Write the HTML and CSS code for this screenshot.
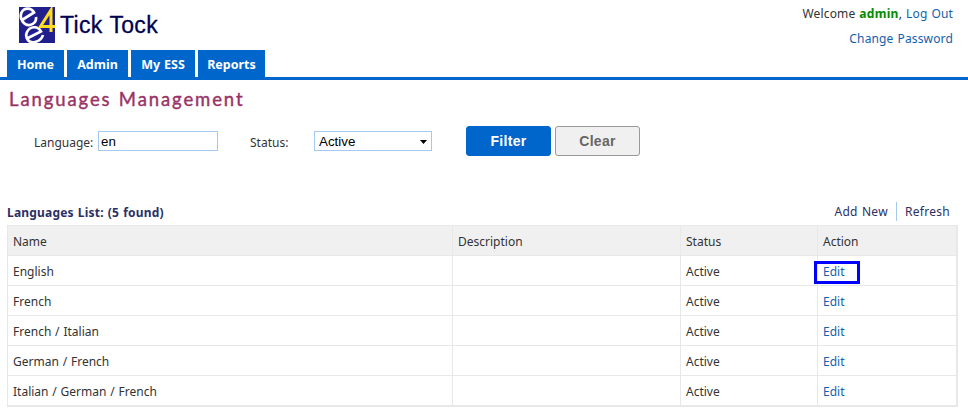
FILE: index.html
```html
<!DOCTYPE html>
<html lang="en">
<head>
<meta charset="utf-8">
<title>Languages Management</title>
<link rel="stylesheet" href="styles.css">
</head>
<body>
<header class="top">
  <div class="brand">
    <svg class="logo" width="36" height="36" viewBox="0 0 36 36">
      <rect width="36" height="36" fill="#211f8c"/>
      <g fill="none" stroke="#fff" stroke-width="2.7">
        <path d="M3 13 L15 5.500 C12 0 5 .5 2.500 5.500 C0 12 5 19 11 18 C15 17 17.500 14 17 10"/>
        <path d="M9 31 L22 24.500 C19 18.500 11 19 8 25 C5.500 31 10 36.500 16 35 C20 34 23 31.500 24 28"/>
      </g>
      <path d="M36 19.500 H21.500 L32 3 V25" fill="none" stroke="#ffdc22" stroke-width="3"/>
    </svg>
    <span class="brand-name">Tick Tock</span>
  </div>
  <div class="account">
    <div>Welcome <b>admin</b>, <a>Log Out</a></div>
    <div><a>Change Password</a></div>
  </div>
</header>
<nav class="tabs"><a class="home">Home</a><a class="admin">Admin</a><a class="ess">My ESS</a><a class="reports">Reports</a></nav>
<main>
  <h1>Languages Management</h1>
  <form class="filters">
    <label class="language-label">Language:</label>
    <div class="field language-field">en</div>
    <label class="status-label">Status:</label>
    <div class="field select">Active<svg width="7" height="4" viewBox="0 0 7 4"><path d="M0 0H7L3.500 4Z"/></svg></div>
    <button type="button" class="primary">Filter</button>
    <button type="button" class="secondary">Clear</button>
  </form>
  <div class="list-head">
    <h2>Languages List: (5 found)</h2>
    <div class="actions"><a>Add New</a><a class="refresh">Refresh</a></div>
  </div>
  <div class="table">
    <div class="row head"><span>Name</span><span>Description</span><span>Status</span><span>Action</span></div>
    <div class="row"><span>English</span><span></span><span>Active</span><span class="marked"><a>Edit</a></span></div>
    <div class="row"><span>French</span><span></span><span>Active</span><span><a>Edit</a></span></div>
    <div class="row"><span>French / Italian</span><span></span><span>Active</span><span><a>Edit</a></span></div>
    <div class="row"><span>German / French</span><span></span><span>Active</span><span><a>Edit</a></span></div>
    <div class="row"><span>Italian / German / French</span><span></span><span>Active</span><span><a>Edit</a></span></div>
  </div>
</main>
</body>
</html>
```
FILE: styles.css
```css
*, *::after { box-sizing: border-box; }
body { margin: 0; height: 412px; overflow: hidden; background: #fff; color: #333; font: 12px/18px "Noto Sans", sans-serif; word-spacing: .7px; }
a { color: #1560ac; }
.top { display: flex; justify-content: space-between; height: 50px; padding: 0 15px 0 19px; }
.brand { display: flex; padding-top: 7px; }
.brand-name { margin: 5px 0 0 5px; color: #000050; font: 23px/26px "Liberation Sans", sans-serif; letter-spacing: .3px; -webkit-text-stroke: 0.3px #000050; }
.account { padding-top: 5px; text-align: right; line-height: 25px; margin-top: -4px; letter-spacing: .15px; }
.account b { color: #008c00; letter-spacing: .3px; }
.tabs { display: flex; gap: 3px; height: 30px; padding-left: 7px; border-bottom: 3px solid #0066cc; }
.tabs a { height: 27px; background: #0066cc; color: #fff; font-weight: 700; font-size: 12.5px; line-height: 29px; text-align: center; }
.home { width: 57px; }
.admin { width: 61px; }
.ess { width: 64px; }
.reports { width: 67px; }
main { padding: 0 10px 0 7px; }
h1 { margin: 7px 0 0 2px; height: 26px; color: #993366; font: 400 18.5px/25px Lato, sans-serif; -webkit-text-stroke: .4px #993366; letter-spacing: 1.9px; white-space: nowrap; }
.filters { display: flex; margin-top: 13px; height: 30px; }
.filters label { padding-top: 8px; }
.language-label { width: 91px; padding-left: 27px; white-space: nowrap; }
.status-label { width: 64px; margin-left: 32px; }
.field { height: 20px; margin-top: 5px; border: 1px solid #a6c9ef; color: #000; font: 13.33px/20px "Liberation Sans", sans-serif; padding-left: 2px; }
.language-field { width: 120px; }
.select { display: flex; justify-content: space-between; align-items: center; width: 118px; padding: 1px 4px 0; margin-right: 34px; }
button { width: 85px; height: 30px; padding: 0; border-radius: 3px; font: 700 14px/28px "Liberation Sans", sans-serif; letter-spacing: .3px; }
.primary { background: #0066cc; border: 1px solid #0066cc; color: #fff; margin-right: 4px; }
.secondary { background: #f0f0f0; border: 1px solid #999; color: #666; }
.list-head { display: flex; justify-content: space-between; height: 25px; margin-top: 44px; }
h2 { margin: 0; padding-top: 3px; color: #2b2f64; font-size: 12px; line-height: 20px; letter-spacing: .2px; }
.actions { display: flex; height: 19px; margin-top: 2px; padding-right: 8px; line-height: 19px; letter-spacing: .3px; }
.actions a { color: #2b2f64; }
.actions .refresh { margin-left: 8px; padding-left: 8px; border-left: 1px solid #a6c9ef; }
.table { border: 1px solid #e8e8e8; border-right-width: 2px; border-bottom-width: 2px; }
.row { display: grid; grid-template-columns: 445px 228px 137px 1fr; height: 30px; border-bottom: 1px solid #e8e8e8; }
.row:last-child { height: 29px; border-bottom: 0; }
.row > span { padding-left: 5px; line-height: 31px; border-right: 1px solid #e8e8e8; }
.row > span:last-child { border-right: 0; }
.head { background: #f0f0f0; }
.marked { position: relative; }
.marked::after { content: ""; position: absolute; left: -4px; top: 5px; width: 46px; height: 23px; border: 3px solid #0000ff; }
```
